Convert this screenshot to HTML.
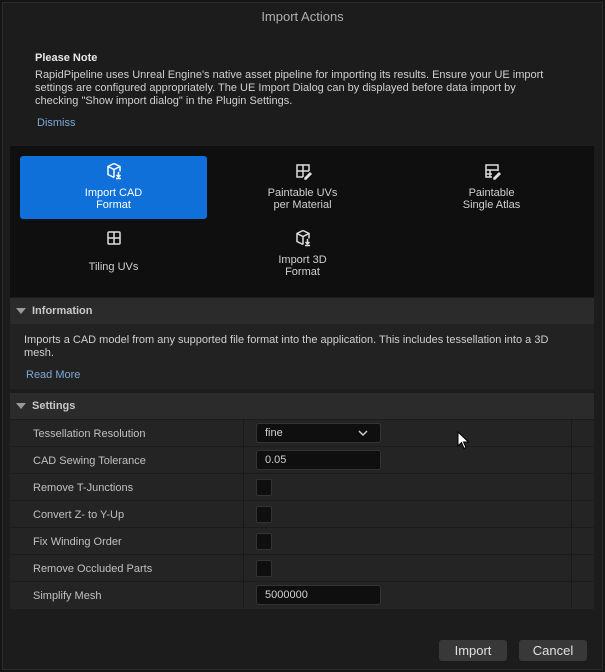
<!DOCTYPE html>
<html><head><style>
*{margin:0;padding:0;box-sizing:border-box}
body{width:605px;height:672px;background:#151515;font-family:"Liberation Sans",sans-serif;font-size:11px;color:#c8c8c8;position:relative;overflow:hidden}
.win{position:absolute;left:2px;top:2px;width:601px;height:668px;background:#1c1c1c;border:1px solid #2c2c2c}
.abs{position:absolute}
.title{left:0;top:9px;width:605px;text-align:center;font-size:13px;color:#b0b0b0}
.grid{left:10px;top:146px;width:584px;height:151px;background:#0f0f0f}
.tile{position:absolute;width:187px;height:63px;text-align:center;color:#d0d0d0;font-size:11px;line-height:12px;border-radius:3px}
.tile svg{display:block;margin:6px auto 7px}
.hdr{left:10px;width:584px;height:26px;background:#2b2b2b;font-weight:bold;color:#c8c8c8;line-height:27px;padding-left:22px}
.hdr:before{content:"";position:absolute;left:6px;top:10px;border-left:5px solid transparent;border-right:5px solid transparent;border-top:6px solid #9a9a9a}
.row{position:absolute;left:10px;width:584px;height:26px;background:#242424;line-height:28px}
.row .l{position:absolute;left:23px;color:#c0c0c0}
.row .d1{position:absolute;left:233px;top:0;width:1px;height:26px;background:#1a1a1a}
.row .d2{position:absolute;left:561px;top:0;width:1px;height:26px;background:#1a1a1a}
.inp{position:absolute;left:246px;top:3px;width:125px;height:20px;background:#0f0f0f;border:1px solid #333;border-radius:3px;line-height:19px;padding-left:8px;color:#d0d0d0}
.cb{position:absolute;left:246px;top:5px;width:16px;height:17px;background:#0f0f0f;border:1px solid #333;border-radius:2px}
.btn{position:absolute;top:640px;height:21px;background:#383838;border-radius:3px;text-align:center;line-height:21px;font-size:13px;color:#e0e0e0}
</style></head><body>
<div class="win"></div>
<div class="abs title">Import Actions</div>
<div class="abs" style="left:35px;top:52px;font-weight:bold;color:#e8e8e8">Please Note</div>
<div class="abs" style="left:35px;top:69px;width:522px;line-height:13px;color:#d0d0d0">RapidPipeline uses Unreal Engine's native asset pipeline for importing its results. Ensure your UE import settings are configured appropriately. The UE Import Dialog can by displayed before data import by checking "Show import dialog" in the Plugin Settings.</div>
<div class="abs" style="left:37px;top:117px;color:#7fa8d8">Dismiss</div>
<div class="abs grid">
 <div class="tile" style="left:10px;top:10px;background:#0e70d8;color:#fff">
  <svg width="18" height="18" viewBox="0 0 18 18" fill="none" stroke="#fff" stroke-width="1.5"><path d="M9 1.5l6 3v5M9 1.5l-6 3v8l6 3M3 4.5l6 3 6-3M9 7.5v8"/><path d="M13.5 10v5M11.5 13l2 2 2-2M11 16.5h5"/></svg>Import CAD<br>Format</div>
 <div class="tile" style="left:199px;top:10px">
  <svg width="18" height="18" viewBox="0 0 18 18" fill="none" stroke="#ddd" stroke-width="1.5"><path d="M9 15H3V3h12v6M3 9h12M9 3v12"/><path d="M11 16l5-5 1 1-5 5h-1z"/></svg>Paintable UVs<br>per Material</div>
 <div class="tile" style="left:388px;top:10px">
  <svg width="18" height="18" viewBox="0 0 18 18" fill="none" stroke="#ddd" stroke-width="1.5"><path d="M9 15H3V3h12v6M3 8h12M3 12h6M7 8v7"/><path d="M11 16l5-5 1 1-5 5h-1z"/></svg>Paintable<br>Single Atlas</div>
 <div class="tile" style="left:10px;top:77px">
  <svg width="18" height="18" viewBox="0 0 18 18" fill="none" stroke="#ddd" stroke-width="1.5"><rect x="3" y="3" width="12" height="12" rx="1"/><path d="M3 9h12M9 3v12"/></svg><div style="margin-top:14px">Tiling UVs</div></div>
 <div class="tile" style="left:199px;top:77px">
  <svg width="18" height="18" viewBox="0 0 18 18" fill="none" stroke="#ddd" stroke-width="1.5"><path d="M9 1.5l6 3v5M9 1.5l-6 3v8l6 3M3 4.5l6 3 6-3M9 7.5v8"/><path d="M13.5 10v5M11.5 13l2 2 2-2M11 16.5h5"/></svg>Import 3D<br>Format</div>
</div>
<div class="abs hdr" style="top:298px">Information</div>
<div class="abs" style="left:10px;top:324px;width:584px;height:65px;background:#222"></div>
<div class="abs" style="left:24px;top:334px;width:555px;line-height:13px;color:#d0d0d0">Imports a CAD model from any supported file format into the application. This includes tessellation into a 3D mesh.</div>
<div class="abs" style="left:26px;top:369px;color:#7fa8d8">Read More</div>
<div class="abs hdr" style="top:393px">Settings</div>
<div class="row" style="top:420px"><span class="l">Tessellation Resolution</span><i class="d1"></i><i class="d2"></i><div class="inp">fine<svg style="position:absolute;right:12px;top:6px" width="10" height="6" viewBox="0 0 10 6" fill="none" stroke="#ccc" stroke-width="1.5"><path d="M1 1l4 4 4-4"/></svg></div></div>
<div class="row" style="top:447px"><span class="l">CAD Sewing Tolerance</span><i class="d1"></i><i class="d2"></i><div class="inp">0.05</div></div>
<div class="row" style="top:474px"><span class="l">Remove T-Junctions</span><i class="d1"></i><i class="d2"></i><div class="cb"></div></div>
<div class="row" style="top:501px"><span class="l">Convert Z- to Y-Up</span><i class="d1"></i><i class="d2"></i><div class="cb"></div></div>
<div class="row" style="top:528px"><span class="l">Fix Winding Order</span><i class="d1"></i><i class="d2"></i><div class="cb"></div></div>
<div class="row" style="top:555px"><span class="l">Remove Occluded Parts</span><i class="d1"></i><i class="d2"></i><div class="cb"></div></div>
<div class="row" style="top:582px;height:27px"><span class="l">Simplify Mesh</span><i class="d1"></i><i class="d2"></i><div class="inp">5000000</div></div>
<svg class="abs" style="left:457px;top:431px" width="12" height="19" viewBox="0 0 12 19"><path d="M1 1v14l3.5-3.5 2.5 6 2-1-2.5-5.5h5z" fill="#fff" stroke="#000" stroke-width="1"/></svg>
<div class="btn" style="left:439px;width:68px">Import</div>
<div class="btn" style="left:519px;width:68px">Cancel</div>
</body></html>
